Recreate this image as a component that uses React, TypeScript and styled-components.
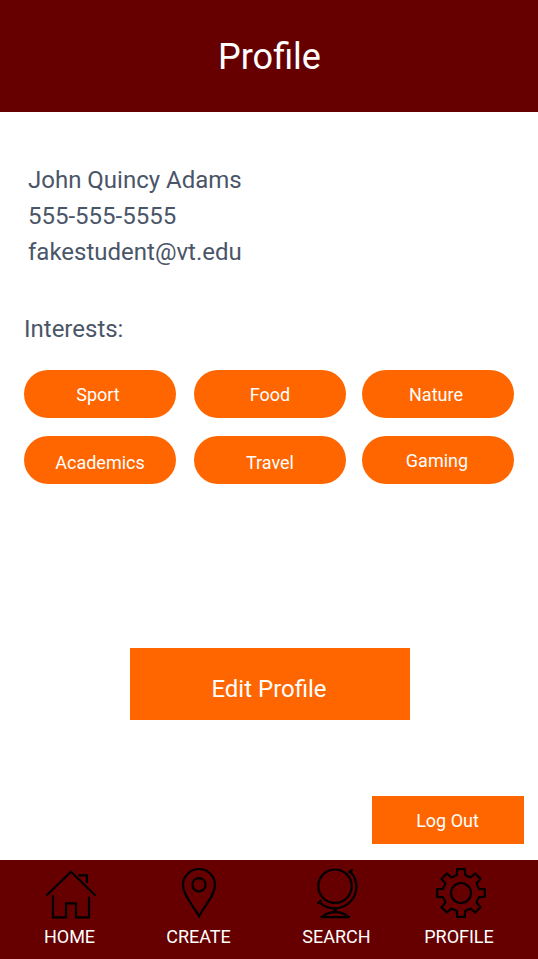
import React from "react";
import styled, { createGlobalStyle } from "styled-components";

const maroon = "#660000";
const orange = "#ff6600";
const slate = "#4a5568";

const GlobalStyle = createGlobalStyle`
  *, *::before, *::after { box-sizing: border-box; }
  body { margin: 0; background: #fff; font-family: Roboto, sans-serif; }
  button { font-family: inherit; border: 0; margin: 0; cursor: pointer; }
`;

const Screen = styled.div`
  display: flex;
  flex-direction: column;
  width: 538px;
  height: 959px;
  background: #fff;
  overflow: hidden;
`;

const Header = styled.header`
  display: flex;
  align-items: center;
  justify-content: center;
  flex: none;
  height: 112px;
  padding-top: 2px;
  background: ${maroon};
`;

const Title = styled.h1`
  margin: 0;
  padding-left: 1px;
  color: #fff;
  font-size: 36px;
  font-weight: 400;
  line-height: 54px;
`;

const Content = styled.main`
  display: flex;
  flex-direction: column;
  flex: 1;
  padding: 50px 14px 16px 24px;
`;

const Details = styled.address`
  padding-left: 4px;
  color: ${slate};
  font-size: 24px;
  font-style: normal;
  line-height: 36px;
`;

const SectionTitle = styled.h2`
  margin: 41px 0 23px;
  color: ${slate};
  font-size: 24px;
  font-weight: 400;
  line-height: 36px;
`;

const Interests = styled.div`
  display: grid;
  grid-template-columns: 170px 168px 152px;
  row-gap: 18px;
`;

const Chip = styled.button<{ $top: number; $right: number }>`
  width: 152px;
  height: 48px;
  padding: ${(p) => p.$top}px ${(p) => p.$right}px 0 0;
  border-radius: 24px;
  background: ${orange};
  color: #fff;
  font-size: 18px;
  line-height: 27px;
`;

const EditButton = styled.button`
  align-self: center;
  width: 280px;
  height: 72px;
  margin: 164px 0 0 -8px;
  padding: 10px 2px 0 0;
  background: ${orange};
  color: #fff;
  font-size: 24px;
  line-height: 36px;
`;

const LogOutButton = styled.button`
  align-self: flex-end;
  width: 152px;
  height: 48px;
  margin-top: auto;
  padding: 0 1px 0 0;
  background: ${orange};
  color: #fff;
  font-size: 18px;
  line-height: 27px;
`;

const NavBar = styled.nav`
  display: grid;
  grid-template-columns: 139px 119px 157px 88px;
  flex: none;
  height: 99px;
  background: ${maroon};
`;

const NavItem = styled.a`
  display: flex;
  flex-direction: column;
  align-items: center;
  padding-top: 7px;
  color: #fff;
  font-size: 18px;
  line-height: 27px;
`;

const NavIcon = styled.svg`
  display: block;
  width: 57px;
  height: 52px;
  margin-bottom: 4px;
  fill: none;
  stroke: #000;
  stroke-width: 2.2;
  overflow: visible;
`;

// Outline of an eight-toothed cog centred on (30, 26).
const gearPath = (() => {
  const tooth = [
    [-6.2, -16.9],
    [-4.2, -18],
    [-3.8, -23.8],
    [3.8, -23.8],
    [4.2, -18],
    [6.2, -16.9],
  ];
  const points: string[] = [];
  for (let i = 0; i < 8; i++) {
    const a = (i * Math.PI) / 4;
    tooth.forEach(([x, y]) => {
      const px = 30 + x * Math.cos(a) - y * Math.sin(a);
      const py = 26 + x * Math.sin(a) + y * Math.cos(a);
      points.push(`${px.toFixed(2)} ${py.toFixed(2)}`);
    });
  }
  return `M${points.join("L")}Z`;
})();

const HomeIcon = () => (
  <NavIcon viewBox="0 0 57 52">
    <path d="M5.5 28.5 30 4.7 54.5 28.5M12 28.3v22h13v-14h10v14h13V29.7M37.5 8.3H46V16" />
  </NavIcon>
);

const PinIcon = () => (
  <NavIcon viewBox="0 0 57 52">
    <path d="M29 49.3C23.5 38.5 13 28.5 13 18a16 16 0 0 1 32 0C45 28.5 34.5 38.5 29 49.3Z" />
    <circle cx="29" cy="17.7" r="6.6" />
  </NavIcon>
);

const GlobeIcon = () => (
  <NavIcon viewBox="0 0 57 52">
    <circle cx="27" cy="19.2" r="16.7" />
    <path d="M12.3 35.9A21.7 21.7 0 0 0 42.6 4.9M40.6 5.8l4.2-3.4M9.6 36.8l3.8-3.8" />
    <path d="M27.2 41.5v3.5" strokeWidth="3.4" />
    <path d="M12.5 50.2h29.6M14 50C18 46.4 22.4 45.2 27.3 45.2S36.6 46.4 40.6 50" />
  </NavIcon>
);

const GearIcon = () => (
  <NavIcon viewBox="0 0 57 52" strokeLinejoin="round">
    <path d={gearPath} />
    <circle cx="30" cy="26" r="10" />
  </NavIcon>
);

const interests = [
  { name: "Sport", top: 0, right: 4 },
  { name: "Food", top: 0, right: 0 },
  { name: "Nature", top: 0, right: 4 },
  { name: "Academics", top: 4, right: 0 },
  { name: "Travel", top: 4, right: 0 },
  { name: "Gaming", top: 0, right: 2 },
];

const tabs = [
  { label: "HOME", Icon: HomeIcon },
  { label: "CREATE", Icon: PinIcon },
  { label: "SEARCH", Icon: GlobeIcon },
  { label: "PROFILE", Icon: GearIcon },
];

export default function App() {
  return (
    <>
      <GlobalStyle />
      <Screen>
        <Header>
          <Title>Profile</Title>
        </Header>
        <Content>
          <Details>
            <div>John Quincy Adams</div>
            <div>555-555-5555</div>
            <div>fakestudent@vt.edu</div>
          </Details>
          <SectionTitle>Interests:</SectionTitle>
          <Interests>
            {interests.map(({ name, top, right }) => (
              <Chip key={name} $top={top} $right={right}>
                {name}
              </Chip>
            ))}
          </Interests>
          <EditButton>Edit Profile</EditButton>
          <LogOutButton>Log Out</LogOutButton>
        </Content>
        <NavBar>
          {tabs.map(({ label, Icon }) => (
            <NavItem key={label}>
              <Icon />
              {label}
            </NavItem>
          ))}
        </NavBar>
      </Screen>
    </>
  );
}
